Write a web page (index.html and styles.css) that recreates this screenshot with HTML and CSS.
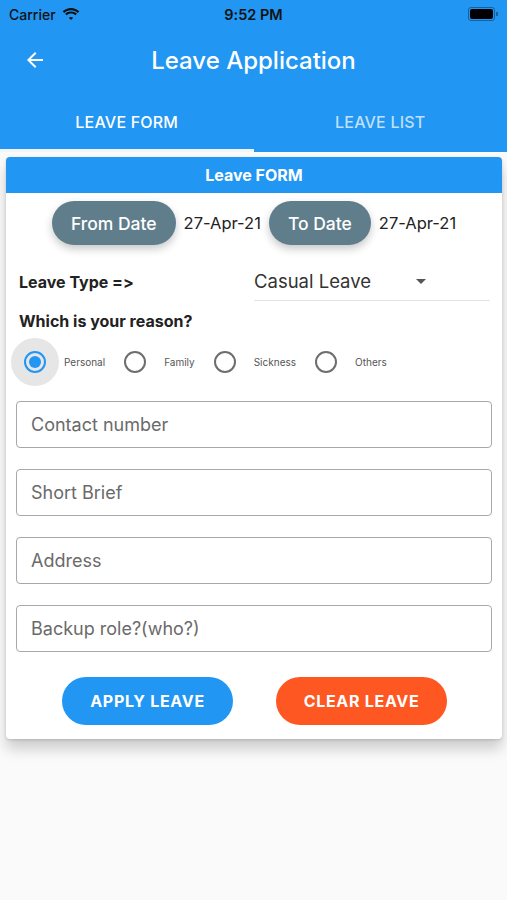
FILE: index.html
```html
<!DOCTYPE html>
<html lang="en">
<head>
  <meta charset="UTF-8">
  <meta name="viewport" content="width=device-width, initial-scale=1.0">
  <title>Leave Application</title>
  <link rel="stylesheet" href="styles.css">
</head>
<body>
  <div class="header">
    <div class="status-bar">
      <div class="status-left">
        <span>Carrier</span>
        <svg class="wifi" width="18" height="13" viewBox="0 0 18 13">
          <path d="M9 2.2c2.6 0 5 1 6.8 2.7l1.5-1.6C15.1 1.3 12.2 0 9 0S2.9 1.3.7 3.3l1.5 1.6C4 3.2 6.4 2.2 9 2.2z" fill="#111"/>
          <path d="M9 5.6c1.7 0 3.2.6 4.4 1.7l1.5-1.6C13.3 4.3 11.3 3.4 9 3.4S4.7 4.3 3.1 5.7l1.5 1.6C5.8 6.2 7.3 5.6 9 5.6z" fill="#111"/>
          <path d="M9 8.9c.8 0 1.5.3 2.1.8L9 12 6.9 9.7c.6-.5 1.3-.8 2.1-.8z" fill="#111"/>
        </svg>
      </div>
      <div class="status-time">9:52 PM</div>
      <div class="status-right">
        <div class="battery"><div class="battery-fill"></div></div>
        <div class="battery-nub"></div>
      </div>
    </div>

    <div class="app-bar">
      <svg class="back" width="24" height="24" viewBox="0 0 24 24">
        <path d="M20 11H7.83l5.59-5.59L12 4l-8 8 8 8 1.41-1.41L7.83 13H20v-2z" fill="#fff"/>
      </svg>
      <div class="app-title">Leave Application</div>
    </div>

    <div class="tabs">
      <div class="tab active">LEAVE FORM</div>
      <div class="tab">LEAVE LIST</div>
    </div>
  </div>

  <div class="page">
    <div class="card">
      <div class="card-title">Leave FORM</div>

      <div class="dates">
        <div class="chip">From Date</div>
        <span class="date-text">27-Apr-21</span>
        <div class="chip">To Date</div>
        <span class="date-text">27-Apr-21</span>
      </div>

      <div class="leave-type">
        <div class="label">Leave Type =&gt;</div>
        <div class="dropdown">
          <span class="dropdown-value">Casual Leave</span>
          <svg class="dropdown-arrow" width="24" height="24" viewBox="0 0 24 24">
            <path d="M7 10l5 5 5-5z" fill="#555"/>
          </svg>
        </div>
      </div>

      <div class="label reason">Which is your reason?</div>

      <div class="radios">
        <div class="radio-item">
          <div class="radio-hit selected"><div class="radio checked"></div></div>
          <span class="radio-label">Personal</span>
        </div>
        <div class="radio-item">
          <div class="radio-hit"><div class="radio"></div></div>
          <span class="radio-label">Family</span>
        </div>
        <div class="radio-item">
          <div class="radio-hit"><div class="radio"></div></div>
          <span class="radio-label">Sickness</span>
        </div>
        <div class="radio-item">
          <div class="radio-hit"><div class="radio"></div></div>
          <span class="radio-label">Others</span>
        </div>
      </div>

      <div class="fields">
        <input type="text" placeholder="Contact number">
        <input type="text" placeholder="Short Brief">
        <input type="text" placeholder="Address">
        <input type="text" placeholder="Backup role?(who?)">
      </div>

      <div class="actions">
        <button class="btn btn-apply">APPLY LEAVE</button>
        <button class="btn btn-clear">CLEAR LEAVE</button>
      </div>
    </div>
  </div>
</body>
</html>
```

FILE: styles.css
```css
body {
  margin: 0;
  font-family: Inter, "Noto Sans", sans-serif;
  font-feature-settings: "calt" 0, "liga" 0;
  background-color: #fafafa;
  min-height: 900px;
}

.header {
  background-color: #2196f3;
  color: #fff;
}

.status-bar {
  height: 28px;
  display: flex;
  align-items: center;
  justify-content: space-between;
  padding: 0 9px;
  color: #111;
  font-size: 14px;
  font-weight: 500;
}

.status-left {
  display: flex;
  align-items: center;
  gap: 6px;
  width: 100px;
}

.status-time {
  font-weight: 600;
  font-size: 14.5px;
}

.status-right {
  width: 100px;
  display: flex;
  align-items: center;
  justify-content: flex-end;
}

.battery {
  width: 23px;
  height: 10px;
  border: 1px solid #1a5f99;
  border-radius: 3px;
  padding: 1px;
}

.battery-fill {
  width: 100%;
  height: 100%;
  background: #000;
  border-radius: 2px;
}

.battery-nub {
  width: 2px;
  height: 4px;
  background: #1a5f99;
  border-radius: 0 1px 1px 0;
  margin-left: 1px;
}

.app-bar {
  height: 64px;
  display: flex;
  align-items: center;
  position: relative;
  padding-left: 23px;
}

.app-title {
  position: absolute;
  left: 0;
  right: 0;
  text-align: center;
  font-size: 24px;
  font-weight: 500;
  pointer-events: none;
}

.tabs {
  height: 60px;
  display: flex;
}

.tab {
  flex: 1;
  display: flex;
  align-items: center;
  justify-content: center;
  font-size: 16px;
  font-weight: 500;
  letter-spacing: 0.2px;
  color: rgba(255, 255, 255, 0.72);
  border-bottom: 3px solid transparent;
  padding-top: 2px;
}

.tab.active {
  color: #fff;
  border-bottom-color: #f2f6fa;
}

.page {
  padding: 5px 5px 0 6px;
}

.card {
  background: #fff;
  border-radius: 4px;
  overflow: hidden;
  box-shadow: 0 10px 14px rgba(0, 0, 0, 0.18), 0 1px 3px rgba(0, 0, 0, 0.15);
  padding-bottom: 14px;
}

.card-title {
  height: 36px;
  background: #2196f3;
  color: #fff;
  font-size: 16px;
  font-weight: 700;
  display: flex;
  align-items: center;
  justify-content: center;
}

.dates {
  display: flex;
  align-items: center;
  justify-content: center;
  margin-top: 8px;
  height: 44px;
  gap: 8px;
}

.chip {
  background: #607d8b;
  color: #fff;
  height: 44px;
  border-radius: 22px;
  padding: 0 19px;
  display: flex;
  align-items: center;
  font-size: 17.5px;
  font-weight: 500;
  box-shadow: 0 4px 8px rgba(0, 0, 0, 0.22);
}

.date-text {
  font-size: 16.5px;
  color: #222;
}

.leave-type {
  display: grid;
  grid-template-columns: 248px 236px;
  align-items: center;
  margin-top: 17px;
}

.label {
  font-size: 16px;
  font-weight: 700;
  color: #222;
  padding-left: 13px;
}

.dropdown {
  height: 38px;
  display: flex;
  align-items: center;
  border-bottom: 1px solid #e4e4e4;
}

.dropdown-value {
  font-size: 18.5px;
  color: #333;
  width: 150px;
}

.dropdown-arrow {
  margin-left: 5px;
}

.reason {
  margin-top: 10px;
}

.radios {
  display: flex;
  align-items: center;
  gap: 6px;
  margin: 7px 0 0 5px;
}

.radio-item {
  display: flex;
  align-items: center;
  gap: 5px;
}

.radio-hit {
  width: 48px;
  height: 48px;
  border-radius: 50%;
  display: flex;
  align-items: center;
  justify-content: center;
}

.radio-hit.selected {
  background: #e6e6e6;
}

.radio {
  width: 18px;
  height: 18px;
  border: 2px solid #6e6e6e;
  border-radius: 50%;
  box-sizing: content-box;
  display: flex;
  align-items: center;
  justify-content: center;
}

.radio.checked {
  border-color: #2196f3;
}

.radio.checked::after {
  content: "";
  width: 12px;
  height: 12px;
  border-radius: 50%;
  background: #2196f3;
}

.radio-label {
  font-size: 10px;
  color: #555;
}

.fields {
  display: flex;
  flex-direction: column;
  gap: 21px;
  padding: 0 10px;
  margin-top: 15px;
}

.fields input {
  height: 47px;
  box-sizing: border-box;
  border: 1px solid #a8a8a8;
  border-radius: 4px;
  padding: 0 14px;
  font-family: inherit;
  font-size: 18px;
  color: #333;
}

.fields input::placeholder {
  color: #6a6a6a;
}

.actions {
  display: flex;
  justify-content: center;
  gap: 43px;
  margin-top: 25px;
  padding-left: 1px;
}

.btn {
  width: 171px;
  height: 48px;
  border: none;
  border-radius: 24px;
  color: #fff;
  font-family: inherit;
  font-size: 16px;
  font-weight: 700;
  letter-spacing: 0.7px;
  cursor: pointer;
}

.btn-apply {
  background-color: #2196f3;
}

.btn-clear {
  background-color: #ff5722;
}
```
